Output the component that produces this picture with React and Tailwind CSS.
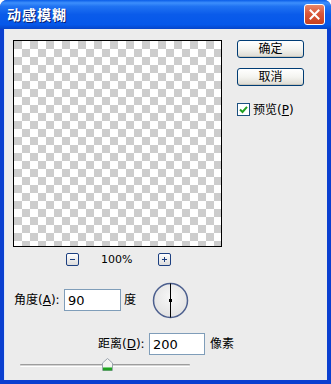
import React from "react";

const font = { fontFamily: '"DejaVu Sans", "Noto Sans CJK SC", sans-serif' };

function XPButton({ children }) {
  return (
    <div className="w-[67px] h-[18px] rounded-[3px] border border-[#003c74] bg-gradient-to-b from-[#ffffff] via-[#f4f4f0] to-[#dcdad2] flex items-center justify-center text-[12px] leading-none text-black shadow-[inset_0_-1px_0_#c8c5ba]">
      {children}
    </div>
  );
}

function SmallBtn({ children }) {
  return (
    <div className="w-[13px] h-[13px] rounded-[2px] border border-[#1c3f80] bg-gradient-to-b from-[#ffffff] to-[#dcdcdc] flex items-center justify-center">
      {children}
    </div>
  );
}

export default function App() {
  return (
    <div className="w-[331px] h-[384px] flex flex-col bg-[#0a3fd0] rounded-t-[7px] overflow-hidden select-none" style={font}>
      {/* Title bar */}
      <div className="h-[29px] shrink-0 flex items-center justify-between pl-[7px] pr-[6px] bg-[linear-gradient(to_bottom,#0a5de8_0%,#3d8ffc_10%,#2073f2_22%,#0a5bea_50%,#0558ea_85%,#0645c9_100%)]">
        <span className="text-white font-bold text-[14px] leading-none [text-shadow:1px_1px_0_#0a1e6e] tracking-[1px]">动感模糊</span>
        <div className="w-[21px] h-[21px] rounded-[3px] border border-white bg-[linear-gradient(to_bottom,#e8876a,#d9573a_45%,#c8401f)] flex items-center justify-center">
          <svg width="11" height="11" viewBox="0 0 11 11">
            <path d="M1.5 1.5 L9.5 9.5 M9.5 1.5 L1.5 9.5" stroke="white" strokeWidth="2" strokeLinecap="square" />
          </svg>
        </div>
      </div>
      {/* Body */}
      <div className="flex-1 mx-[4px] mb-[4px] bg-[#ececec] flex flex-col pt-[11px] text-[12px] text-black border-l border-[#d8e4f8]">
        <div className="flex pl-[8px]">
          <div className="w-[209px] h-[207px] border border-black bg-[conic-gradient(#ffffff_25%,#cdcdcd_0_50%,#ffffff_0_75%,#cdcdcd_0)] bg-[length:16px_16px]" />
          <div className="ml-[15px] flex flex-col">
            <XPButton>确定</XPButton>
            <div className="mt-[10px]">
              <XPButton>取消</XPButton>
            </div>
            <div className="mt-[17px] flex items-center">
              <div className="w-[13px] h-[13px] border border-[#1c5180] bg-white flex items-center justify-center">
                <svg width="9" height="9" viewBox="0 0 9 9">
                  <path d="M1 4.5 L3.5 7 L8 1.8" fill="none" stroke="#21a121" strokeWidth="2" />
                </svg>
              </div>
              <span className="ml-[3px] leading-none">
                预览(<span className="underline">P</span>)
              </span>
            </div>
          </div>
        </div>
        {/* zoom row */}
        <div className="mt-[6px] flex items-center pl-[61px] h-[13px]">
          <SmallBtn>
            <div className="w-[5px] h-[1px] bg-[#1c3f80]" />
          </SmallBtn>
          <span className="ml-[22px] text-[11px] leading-none w-[57px]">100%</span>
          <SmallBtn>
            <svg width="7" height="7" viewBox="0 0 7 7">
              <path d="M3.5 1 V6 M1 3.5 H6" stroke="#1c3f80" strokeWidth="1" />
            </svg>
          </SmallBtn>
        </div>
        {/* angle row */}
        <div className="mt-[16px] flex items-center pl-[9px] h-[36px]">
          <span className="w-[50px] leading-none">
            角度(<span className="underline">A</span>):
          </span>
          <div className="w-[57px] h-[22px] border border-[#7f9db9] bg-white flex items-center pl-[3px] text-[13px] leading-none">90</div>
          <span className="ml-[3px] leading-none">度</span>
          <svg className="ml-[16px]" width="37" height="37" viewBox="0 0 37 37">
            <defs>
              <radialGradient id="dial" cx="50%" cy="40%" r="60%">
                <stop offset="0%" stopColor="#f7f7f7" />
                <stop offset="100%" stopColor="#e2e2e2" />
              </radialGradient>
            </defs>
            <circle cx="18.5" cy="18.5" r="17" fill="url(#dial)" stroke="#4c5f8e" strokeWidth="1.5" />
            <line x1="18.5" y1="1.5" x2="18.5" y2="35.5" stroke="#000" strokeWidth="1" />
            <rect x="17" y="17" width="3" height="3" fill="#000" />
          </svg>
        </div>
        {/* distance row */}
        <div className="mt-[15px] flex items-center pl-[93px] h-[22px]">
          <span className="w-[51px] leading-none">
            距离(<span className="underline">D</span>):
          </span>
          <div className="w-[56px] h-[22px] border border-[#7f9db9] bg-white flex items-center pl-[3px] text-[13px] leading-none">200</div>
          <span className="ml-[5px] leading-none">像素</span>
        </div>
        {/* slider */}
        <div className="mt-[4px] pl-[15px] h-[13px] flex items-center">
          <div className="relative w-[170px] h-[3px] border-t border-[#9d9d9d] border-b border-b-white bg-[#d4d4d4] rounded-[1px]">
            <svg className="absolute left-[82px] top-[-7px]" width="11" height="13" viewBox="0 0 11 13">
              <path d="M0.5 5 L5.5 0.5 L10.5 5 L10.5 12.5 L0.5 12.5 Z" fill="#f4f4f2" stroke="#9aa3ae" strokeWidth="1" />
              <rect x="1" y="10" width="9" height="2.5" fill="#21a121" />
              <rect x="1" y="9" width="9" height="1" fill="#7fd07f" />
            </svg>
          </div>
        </div>
      </div>
    </div>
  );
}
